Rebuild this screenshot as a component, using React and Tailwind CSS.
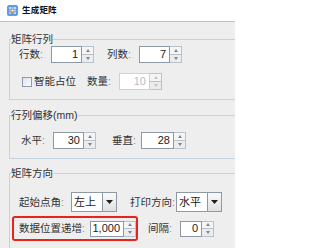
import React from 'react';

/* =========================
   Small widgets
   ========================= */
const Arrow = ({ up, color = '#7a8694' }) => (
  <svg width="4" height="3" viewBox="0 0 4 3">
    <path d={up ? 'M0 3 L2 0 L4 3 Z' : 'M0 0 L4 0 L2 3 Z'} fill={color} />
  </svg>
);

const Spinner = ({ value, fieldW = 'w-[31px]', h = 'h-[17px]', disabled = false }) => (
  <div className={`flex ${h}`}>
    <div
      className={`${fieldW} border ${
        disabled ? 'border-[#c9d1da] text-[#b3bccb]' : 'border-[#8d99a7] text-[#222]'
      } bg-white flex items-center justify-end pr-[3px] text-[11px]`}
    >
      {value}
    </div>
    <div className="flex flex-col w-[12px]">
      <div className="flex-1 border border-l-0 border-[#b9c2cc] bg-[#f5f5f5] flex items-center justify-center">
        <Arrow up color={disabled ? '#c0c6ce' : '#7a8694'} />
      </div>
      <div className="flex-1 border border-l-0 border-t-0 border-[#b9c2cc] bg-[#ececec] flex items-center justify-center">
        <Arrow color={disabled ? '#c0c6ce' : '#7a8694'} />
      </div>
    </div>
  </div>
);

const Combo = ({ value }) => (
  <div className="flex h-[20px] w-[46px] border border-[#8d99a7] bg-white">
    <span className="flex-1 pl-[2px] text-[11px] leading-[18px] text-[#222]">{value}</span>
    <div className="w-[14px] border-l border-[#8d99a7] bg-gradient-to-b from-[#fafafa] to-[#e0e0e0] flex items-center justify-center">
      <svg width="7" height="4" viewBox="0 0 7 4">
        <path d="M0 0 L7 0 L3.5 4 Z" fill="#1f1f1f" />
      </svg>
    </div>
  </div>
);

const Label = ({ text, w }) => (
  <span className={`${w} shrink-0 text-[10.5px] text-[#333] leading-none`}>
    {text}
    <span className="text-[#8c8c8c]">:</span>
  </span>
);

const Group = ({ title, className = '', children }) => (
  <fieldset className={`w-[240px] border border-[#c5d2df] ${className}`}>
    <legend className="ml-[1px] px-0 text-[10.5px] leading-[14px] text-[#333]">{title}</legend>
    {children}
  </fieldset>
);

const AppIcon = () => (
  <svg width="11" height="11" viewBox="0 0 11 11">
    <rect x="0" y="0" width="11" height="11" rx="2" fill="#5c9ee6" />
    <circle cx="3" cy="3" r="1.1" fill="#d6ecff" />
    <circle cx="5.5" cy="3" r="1.1" fill="#a8d4ff" />
    <circle cx="8" cy="3" r="1.1" fill="#d6ecff" />
    <circle cx="3" cy="5.5" r="1.1" fill="#f2b04a" />
    <circle cx="5.5" cy="5.5" r="1.1" fill="#ffffff" />
    <circle cx="8" cy="5.5" r="1.1" fill="#a8d4ff" />
    <circle cx="3" cy="8" r="1.1" fill="#a8d4ff" />
    <circle cx="5.5" cy="8" r="1.1" fill="#e8913a" />
    <circle cx="8" cy="8" r="1.1" fill="#d6ecff" />
  </svg>
);

/* =========================
   RENDER
   ========================= */
export default function App() {
  return (
    <div className="w-[235px] h-[248px] overflow-hidden bg-[#eeeeee] font-['Liberation_Sans','Noto_Sans_CJK_SC',sans-serif] flex flex-col">
      {/* TITLE BAR */}
      <div className="h-[22px] shrink-0 bg-white border-b border-[#c4c4c4] flex items-center pl-[7px] gap-[4px]">
        <AppIcon />
        <span className="text-[8.5px] font-semibold text-[#111] tracking-[0.2px]">生成矩阵</span>
      </div>

      <div className="flex flex-1">
        {/* left window edge */}
        <div className="w-[3px] bg-[#b8b8b8]" />

        <div className="flex-1 pl-[9px]">
          {/* 矩阵行列 */}
          <Group title="矩阵行列" className="mt-[10px] pb-[9px]">
            <div className="flex items-center pl-[9px]">
              <Label text="行数" w="w-[32px]" />
              <Spinner value="1" />
              <span className="w-[13px]" />
              <Label text="列数" w="w-[32px]" />
              <Spinner value="7" />
            </div>
            <div className="flex items-center pl-[12px] mt-[10px] h-[17px]">
              <span className="w-[10px] h-[10px] border border-[#8d9aab] bg-gradient-to-br from-[#dfe6ee] to-[#fafbfd]" />
              <span className="ml-[2px] w-[53px] text-[10.5px] text-[#333] leading-none">智能占位</span>
              <Label text="数量" w="w-[32px]" />
              <Spinner value="10" disabled />
            </div>
          </Group>

          {/* 行列偏移 */}
          <Group title="行列偏移(mm)" className="mt-[8px] pb-[9px]">
            <div className="flex items-center pl-[11px] mt-[10px]">
              <Label text="水平" w="w-[32px]" />
              <Spinner value="30" />
              <span className="w-[16px]" />
              <Label text="垂直" w="w-[29px]" />
              <Spinner value="28" fieldW="w-[33px]" />
            </div>
          </Group>

          {/* 矩阵方向 */}
          <Group title="矩阵方向" className="mt-[7px] pb-[10px]">
            <div className="flex items-center pl-[9px] mt-[12px]">
              <Label text="起始点角" w="w-[52px]" />
              <Combo value="左上" />
              <span className="w-[13px]" />
              <Label text="打印方向" w="w-[46px]" />
              <Combo value="水平" />
            </div>
            <div className="flex items-center pl-[2px] mt-[4px]">
              <div className="flex items-center h-[25px] w-[126px] border-2 border-[#e8231e] rounded-[3px] pl-[5px]">
                <Label text="数据位置递增" w="w-[71px]" />
                <Spinner value="1,000" fieldW="w-[34px]" h="h-[16px]" />
              </div>
              <span className="w-[10px]" />
              <Label text="间隔" w="w-[32px]" />
              <Spinner value="0" fieldW="w-[22px]" h="h-[16px]" />
            </div>
          </Group>
        </div>
      </div>
    </div>
  );
}
